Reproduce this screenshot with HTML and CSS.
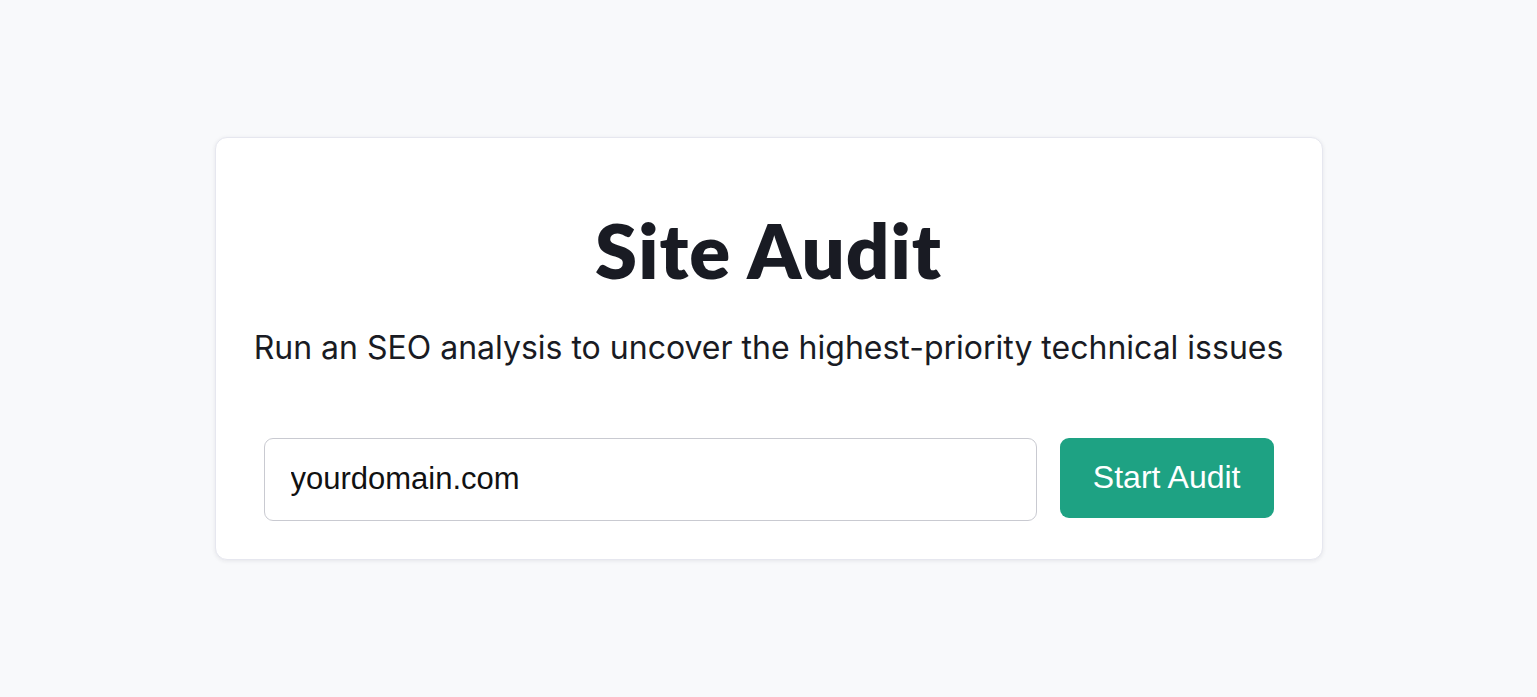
FILE: index.html
```html
<!DOCTYPE html>
<html lang="en">
<head>
  <meta charset="UTF-8">
  <title>Site Audit</title>
  <link rel="stylesheet" href="styles.css">
</head>
<body>
  <main class="page">
    <section class="audit-card">
      <h1 class="audit-title">Site Audit</h1>
      <p class="audit-sub">Run an SEO analysis to uncover the highest-priority technical issues</p>
      <form class="audit-form" onsubmit="return false;">
        <input class="audit-input" type="text" value="yourdomain.com">
        <button class="audit-btn" type="submit">Start Audit</button>
      </form>
    </section>
  </main>
</body>
</html>
```

FILE: styles.css
```css
html, body { margin: 0; height: 100%; }
body { background: #f8f9fb; font-family: "Inter", "Liberation Sans", sans-serif; }
.page {
  height: 100%;
  display: flex; align-items: center; justify-content: center;
}
.audit-card {
  width: 1108px; box-sizing: border-box;
  padding: 66px 48px 38px;
  background: #fff;
  border: 1px solid #e6e7ef; border-radius: 12px;
  box-shadow: 0 1px 4px rgba(30, 35, 60, 0.09);
  text-align: center;
}
.audit-title {
  margin: 0;
  font-family: "Lato", sans-serif; font-weight: 800;
  font-size: 76px; line-height: 1.2; letter-spacing: 1px;
  color: #191b23;
}
.audit-sub {
  margin: 32px -20px 0;
  font-size: 32px; line-height: 1.3; white-space: nowrap;
  color: #191b23;
}
.audit-form {
  display: flex; gap: 23px; align-items: flex-start;
  margin-top: 69px;
}
.audit-input {
  flex: 1; height: 83px; box-sizing: border-box;
  padding: 0 26px;
  border: 1px solid #c9cad1; border-radius: 9px;
  font-family: "Liberation Sans", Arial, sans-serif; font-size: 31px; color: #111;
  outline: none;
}
.audit-btn {
  height: 80px; padding: 0 33px;
  border: 0; border-radius: 9px;
  background: #1ea283; color: #fff;
  font-family: "Liberation Sans", Arial, sans-serif; font-size: 32px;
  cursor: pointer;
}
```
